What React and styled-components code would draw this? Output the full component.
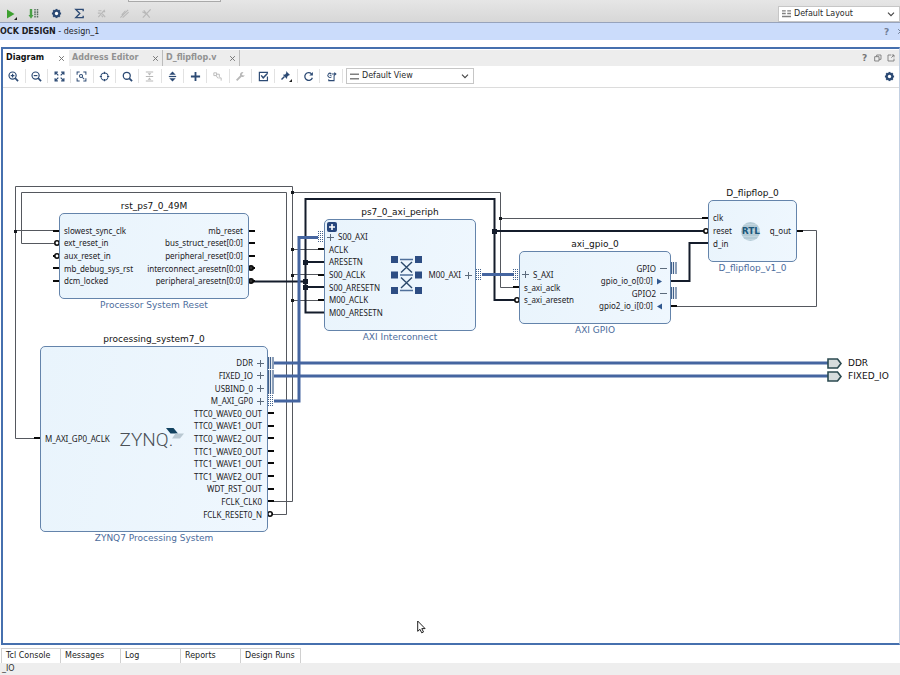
import React from "react";
import styled, { createGlobalStyle, css } from "styled-components";

const navy = "#2c4a74";
const uiFont = `"DejaVu Sans", sans-serif`;
const portFont = `"Noto Sans", "Open Sans", sans-serif`;

const GlobalStyle = createGlobalStyle`
  * { box-sizing: border-box; }
  body { margin: 0; background: #fff; color: #1d1d1f; font: 8px/12px ${uiFont}; }
  button, select { font: inherit; color: inherit; }
`;

/* ---------- window frame ---------- */

const Page = styled.div`
  display: flex;
  flex-direction: column;
  min-height: 100vh;
  overflow: hidden;
`;

const MainToolbar = styled.header`
  display: flex;
  align-items: center;
  justify-content: space-between;
  height: 23px;
  padding-top: 5px;
  background: linear-gradient(#e6e6e6, #d7d7d7);
  border-bottom: 1px solid #97a3bb;
  position: relative;
`;

const ClippedField = styled.div`
  position: absolute;
  top: 0;
  left: 128px;
  width: 93px;
  height: 2px;
  border: 1px solid #a9a9a9;
  border-top: 0;
  background: #f2f2f2;
`;

const IconGroup = styled.div`
  display: flex;
  width: ${(p) => p.$width}px;
`;

const IconButton = styled.button`
  flex: 1;
  display: flex;
  align-items: center;
  justify-content: center;
  height: 14px;
  min-width: 0;
  padding: 0;
  border: 0;
  background: none;
  color: ${(p) => (p.disabled ? "#b8b8b8" : navy)};
  ${(p) =>
    p.$divided &&
    css`
      border-right: 1px solid #e2e2e2;
    `}
`;

const Picker = styled.label`
  display: flex;
  align-items: center;
  gap: 3px;
  width: ${(p) => p.$width}px;
  height: 16px;
  padding: 0 4px 0 3px;
  background: #fff;
  border: 1px solid #c6c6c6;
  color: #808080;
`;

const PickerSelect = styled.select`
  flex: 1;
  min-width: 0;
  height: 14px;
  padding: 0;
  border: 0;
  background: none;
  appearance: none;
  color: #2a2a2a;
  line-height: 14px;
`;

const TitleBar = styled.div`
  display: flex;
  align-items: center;
  justify-content: space-between;
  height: 17px;
  background: #cbdcfb;
`;

const Title = styled.h1`
  margin: 0;
  font-size: 8px;
  line-height: 16px;
  font-weight: 400;
`;

const TitleActions = styled.div`
  display: flex;
  gap: 5px;
  margin-right: -5px;
  color: #707e96;
`;

const GlyphButton = styled.button`
  display: flex;
  align-items: center;
  justify-content: center;
  width: ${(p) => p.$size || 9}px;
  height: 12px;
  padding: 0;
  border: 0;
  background: none;
  color: inherit;
  font-size: 9px;
  font-weight: ${(p) => (p.$bold ? 700 : 400)};
`;

const Panel = styled.main`
  flex: 1;
  display: flex;
  flex-direction: column;
  margin: 7px 0 0 1px;
  border: 2px solid #4670ae;
  border-right: 1px solid #c3d0e2;
`;

/* ---------- editor tabs ---------- */

const TabStrip = styled.div`
  display: flex;
  align-items: stretch;
  height: 17px;
  border-top: 1px solid #fff;
  background: #ededed;
`;

const EditorTab = styled.div`
  display: flex;
  align-items: center;
  justify-content: space-between;
  width: ${(p) => p.$width}px;
  padding: 0 3px;
  background: ${(p) => (p.$active ? "#fff" : "transparent")};
  border-right: 1px solid ${(p) => (p.$active ? "transparent" : "#bcbcbc")};
  color: #777;
`;

const TabLabel = styled.button`
  padding: 0;
  border: 0;
  background: none;
  font-weight: 700;
  white-space: nowrap;
  color: ${(p) => (p.$active ? "#111" : "#929292")};
`;

const TabActions = styled.div`
  display: flex;
  gap: 4px;
  margin-left: auto;
  padding-right: 4px;
  align-items: center;
  color: #777;
`;

const DiagramToolbar = styled.div`
  display: flex;
  align-items: center;
  gap: 3px;
  height: 22px;
  padding: 0 3px 1px 0;
  border-bottom: 1px solid #dcdcdc;
`;

const SettingsSlot = styled.div`
  display: flex;
  width: 14px;
  margin-left: auto;
`;

/* ---------- block design sheet ---------- */

const PAN = { x: 3, y: 88 };

const Sheet = styled.section`
  flex: 1;
  position: relative;
  min-height: 460px;
  overflow: hidden;
  background: #fff;
  font-size: 9px;
`;

const Wires = styled.svg`
  position: absolute;
  left: 0;
  top: 0;
`;

const Node = styled.article`
  position: absolute;
  left: ${(p) => p.$x - PAN.x}px;
  top: ${(p) => p.$y - 14 - PAN.y}px;
  width: ${(p) => p.$w}px;
`;

const NodeName = styled.h2`
  margin: 0;
  height: 14px;
  font-size: 9px;
  line-height: 14px;
  font-weight: 400;
  text-align: center;
  color: #111;
`;

const NodeKind = styled.p`
  margin: 0;
  font-size: 9px;
  line-height: 12px;
  text-align: center;
  color: #4c6c9c;
`;

const NodeBody = styled.div`
  position: relative;
  display: flex;
  align-items: center;
  justify-content: space-between;
  height: ${(p) => p.$h}px;
  padding: 0 3px 0 2px;
  border: 1px solid #6484ab;
  border-radius: 5px;
  background: linear-gradient(100deg, #e9f4fc, #eff7fe);
`;

const PortList = styled.ul`
  display: flex;
  flex-direction: column;
  height: ${(p) => Math.round(p.$count * 12.6)}px;
  margin: 0;
  padding: 0;
  list-style: none;
`;

const Port = styled.li`
  flex: 1;
  display: flex;
  align-items: center;
  justify-content: ${(p) => (p.$out ? "flex-end" : "flex-start")};
  gap: 4px;
  padding: 0 ${(p) => (p.$marked ? 0 : 2)}px;
  font: 8px/12px ${portFont};
  white-space: nowrap;
  color: #1c2024;
`;

const Mark = styled.svg`
  margin-right: ${(p) => (p.$inset ? 5 : 0)}px;
`;

const ExpandButton = styled.button`
  position: absolute;
  left: 2px;
  top: 2px;
  display: flex;
  padding: 0;
  border: 0;
  background: none;
`;

const ZynqLogo = styled.div`
  display: flex;
  align-items: flex-start;
  padding-top: 2px;
  font: 300 19px/24px Roboto, sans-serif;
  color: #4a5056;
`;

const Swoosh = styled.svg`
  margin-left: -7px;
`;

const RtlLogo = styled.div`
  display: grid;
  place-items: center;
  width: 19px;
  height: 19px;
  border-radius: 50%;
  background: repeating-linear-gradient(#b4cbd6 0 2px, #c3d6df 2px 3px);
  color: #1d587b;
  font-weight: 700;
`;

const ExternalPort = styled.div`
  position: absolute;
  left: ${(p) => p.$x - PAN.x}px;
  top: ${(p) => p.$y - PAN.y}px;
  display: flex;
  align-items: center;
  gap: 6px;
  height: 12px;
  color: #111;
`;

const Pointer = styled.svg`
  position: absolute;
  left: ${417 - PAN.x}px;
  top: ${620 - PAN.y}px;
`;

/* ---------- bottom tabs ---------- */

const ConsoleTabs = styled.nav`
  display: flex;
  height: 18px;
  padding: 3px 0 0 1px;
`;

const ConsoleTab = styled.button`
  width: 60px;
  padding: 0 0 0 4px;
  border: 1px solid #d0d0d0;
  border-width: 1px 1px 0 0;
  background: #fff;
  text-align: left;
  white-space: nowrap;
  color: #222;
  &:first-child { border-left-width: 1px; }
`;

const StatusBar = styled.footer`
  height: 12px;
  padding-left: 2px;
  background: #eee;
  color: #333;
`;

/* ---------- icons ---------- */

const Icon = ({ children, size = 11, ...rest }) => (
  <svg width={size} height={size} viewBox="0 0 12 12" fill="none" stroke="currentColor" strokeWidth="1.3" aria-hidden="true" {...rest}>
    {children}
  </svg>
);

const gearTeeth = [0, 45, 90, 135].map((a) => (
  <path key={a} d="M6 1V11" strokeWidth="2.200" transform={`rotate(${a} 6 6)`} />
));

const icons = {
  run: (
    <Icon size={12}>
      <path d="M2 1.500 9.500 6 2 10.500Z" fill="#3da02f" stroke="none" />
      <path d="M12 9V12H9Z" fill="#222" stroke="none" />
    </Icon>
  ),
  bits: (
    <Icon size={12}>
      <path d="M3 1v7" stroke="#4aa046" strokeWidth="2.400" />
      <path d="M.5 7h5L3 10.800Z" fill="#4aa046" stroke="none" />
      <path d="M7 1v8.500M9.500 1v8.500" stroke="#5a6f62" strokeWidth="1.500" strokeDasharray="1.600 .7" />
    </Icon>
  ),
  gear: (
    <Icon>
      {gearTeeth}
      <circle cx="6" cy="6" r="3" strokeWidth="2.200" />
      <circle cx="6" cy="6" r="1.800" fill="#fff" stroke="none" />
    </Icon>
  ),
  sigma: (
    <Icon>
      <path d="M10 3.500V1.500H2L6.300 6 2 10.500h8V8.500" strokeWidth="1.500" />
    </Icon>
  ),
  cutA: (
    <Icon>
      <path d="M2.500 10 9.500 2M2.500 3h3.500M2 5.500h3M7 6.500l3 3.500M6 8l1.500 2M7 4h3" />
    </Icon>
  ),
  cutB: (
    <Icon>
      <path d="M1.500 10.500 10 2M4 10.500 10.500 4.500M3 7.500 7 3" strokeWidth="1.100" />
    </Icon>
  ),
  cutC: (
    <Icon>
      <path d="M2 10.500 10.500 1.500M3 2.500l6.500 8M1.500 4l3.500 2" />
    </Icon>
  ),
  zoomIn: (
    <Icon>
      <circle cx="5" cy="5" r="3.900" />
      <path d="m7.800 7.800 3.200 3.200" strokeWidth="1.800" />
      <path d="M3 5h4M5 3v4" />
    </Icon>
  ),
  zoomOut: (
    <Icon>
      <circle cx="5" cy="5" r="3.900" />
      <path d="m7.800 7.800 3.200 3.200" strokeWidth="1.800" />
      <path d="M3 5h4" />
    </Icon>
  ),
  fit: (
    <Icon strokeWidth="1.300">
      <path d="M1.200 4.200V1.200h3M7.800 1.200h3v3M10.800 7.800v3h-3M4.200 10.800h-3v-3M2 2l2.700 2.700M10 2 7.300 4.700M10 10 7.300 7.300M2 10l2.700-2.700" />
    </Icon>
  ),
  fitSelection: (
    <Icon strokeWidth="1.100">
      <path d="M1.200 4V1.200H4M8 1.200h2.800V4M10.800 8v2.800H8M4 10.800H1.200V8" />
      <circle cx="5.500" cy="5.500" r="1.700" />
      <path d="m7 7 2 2" />
    </Icon>
  ),
  target: (
    <Icon>
      <circle cx="6" cy="6" r="3.900" strokeWidth="1.100" />
      <path d="M6 .8v2.400M6 8.800v2.400M.8 6h2.400M8.800 6h2.400" />
    </Icon>
  ),
  search: (
    <Icon>
      <circle cx="5.200" cy="5.200" r="3.800" strokeWidth="1.400" />
      <path d="m8 8 3 3" strokeWidth="1.900" />
    </Icon>
  ),
  collapse: (
    <Icon>
      <path d="M2 1.200h8M2 6h8M2 10.800h8" strokeWidth="1.100" />
      <path d="M4 2.400h4L6 4.900ZM4 9.600h4L6 7.100Z" fill="currentColor" stroke="none" />
    </Icon>
  ),
  expand: (
    <Icon>
      <path d="M6 .5 9.500 4h-7ZM6 11.500 2.500 8h7Z" fill="currentColor" stroke="none" />
      <path d="M2 6h8" strokeWidth="1.300" />
    </Icon>
  ),
  add: (
    <Icon>
      <path d="M6 1v10M1 6h10" strokeWidth="2" />
    </Icon>
  ),
  connect: (
    <Icon strokeWidth="1">
      <path d="M2 2h3v3H2zM5 3.500h3v3M7 7.500h3v3" />
      <path d="m4.500 5 2 3" />
    </Icon>
  ),
  wrench: (
    <Icon>
      <path d="m1.800 10.200 5-5" strokeWidth="2" />
      <path d="M9.300 1.500A2.600 2.600 0 1 0 10.600 4.500L8.600 5 7.200 3.600Z" fill="currentColor" stroke="none" />
    </Icon>
  ),
  validate: (
    <Icon>
      <path d="M10.300 6v4.500H1.500v-9h8.800V3" />
      <path d="m3.500 4.800 2.200 2.700L10 3" strokeWidth="1.600" />
    </Icon>
  ),
  pin: (
    <Icon size={12}>
      <path d="m6 1 4 4-1.500.500-1.300 1.300L7 9 2.800 4.800l2.400-.2L6.300 3Z" fill="currentColor" stroke="none" />
      <path d="M4.500 6.500 1.500 9.500" strokeWidth="1.400" />
      <path d="M12 9V12H9Z" fill="#222" stroke="none" />
    </Icon>
  ),
  refresh: (
    <Icon>
      <path d="M9.300 3.200A4.200 4.200 0 1 0 10.200 7.300" strokeWidth="1.400" />
      <path d="M10.800 1v4H6.900Z" fill="currentColor" stroke="none" />
    </Icon>
  ),
  regenerate: (
    <Icon strokeWidth="1.100">
      <path d="M5.800 3A2.300 2.300 0 1 0 6 6.300M3 9v1.500h5.800V4.500M6.500 3.200h4.300M9 1.700l1.800 1.500L9 4.700M4 4.700h2" />
    </Icon>
  ),
  close: (
    <Icon size={7} strokeWidth="1.700">
      <path d="m2 2 8 8M10 2l-8 8" />
    </Icon>
  ),
  restore: (
    <Icon size={8}>
      <path d="M1 4h6.500v6.500H1zM4 4V1.500h6.500V8H7.500" />
    </Icon>
  ),
  popOut: (
    <Icon size={8}>
      <path d="M6 1.500H1.500v9h9V7M7 1.500h3.500V5M10.500 1.500 6.500 5.500" />
    </Icon>
  ),
  lines: (
    <Icon size={9} strokeWidth="2.200">
      <path d="M0 3h12M0 9h12" />
    </Icon>
  ),
  layout: (
    <Icon size={9}>
      <path d="M0 2.500h5M7 2.500h5M0 6h5M7 6h5M0 10h12" strokeWidth="1.700" />
    </Icon>
  ),
  chevron: (
    <Icon size={8} stroke="#444" strokeWidth="1.700">
      <path d="m1.500 4 4.500 4.500L10.500 4" />
    </Icon>
  ),
};

const PortMark = ({ kind }) => {
  const arrow = kind === "left" || kind === "right";
  const width = arrow ? 5 : 7;
  return (
    <Mark $inset={arrow} width={width} height="7" viewBox={`0 0 ${width} 7`} aria-hidden="true">
      {kind === "plus" && <path d="M0 3.500h7M3.500 0v7" stroke="#5c6b7c" />}
      {kind === "minus" && <path d="M0 3.500h7" stroke="#5c6b7c" />}
      {kind === "right" && <path d="M0 .5 5 3.500 0 6.500Z" fill="#31588f" />}
      {kind === "left" && <path d="M5 .5 0 3.500 5 6.500Z" fill="#31588f" />}
    </Mark>
  );
};

const Crossbar = () => (
  <svg width="31" height="38" viewBox="0 0 31 38" aria-hidden="true">
    <g fill="#2d4d83">
      {[0, 15.500, 31].map((y) => (
        <React.Fragment key={y}>
          <rect x="0" y={y} width="7" height="7" />
          <rect x="24" y={y} width="7" height="7" />
        </React.Fragment>
      ))}
    </g>
    <path d="M9 3.500h13M9 19h13M9 34.500h13" stroke="#50709b" strokeWidth="1.400" />
    <path d="m10 6 11 10.500M21 6 10 16.500M10 21.500 21 32M21 21.500 10 32" stroke="#2c4a6c" strokeWidth="1.400" />
  </svg>
);

const Zynq = () => (
  <ZynqLogo>
    ZYNQ.
    <Swoosh width="18" height="12" viewBox="0 0 18 12" aria-hidden="true">
      <path d="M0 0h7.500l4.500 5.500H4.500Z" fill="#124260" />
      <path d="M9.500 5.500H18L14 10.500H6Z" fill="#b9c8d2" />
    </Swoosh>
  </ZynqLogo>
);

/* ---------- data ---------- */

const mainTools = [
  ["run", "Run"],
  ["bits", "Generate Bitstream"],
  ["gear", "Settings"],
  ["sigma", "Report"],
  ["cutA", "Cut trace", true],
  ["cutB", "Edit trace", true],
  ["cutC", "Clear trace", true],
];

const diagramTools = [
  ["zoomIn", "Zoom in"],
  ["zoomOut", "Zoom out"],
  ["fit", "Zoom fit"],
  ["fitSelection", "Zoom to selection"],
  ["target", "Centre"],
  ["search", "Search"],
  ["collapse", "Collapse all", true],
  ["expand", "Expand all"],
  ["add", "Add IP"],
  ["connect", "Make connection", true],
  ["wrench", "Customize block", true],
  ["validate", "Validate design"],
  ["pin", "Pin"],
  ["refresh", "Regenerate layout"],
  ["regenerate", "Optimize routing"],
];

const editorTabs = [
  ["Diagram", 66, true],
  ["Address Editor", 94],
  ["D_flipflop.v", 77],
];

const consoleTabs = ["Tcl Console", "Messages", "Log", "Reports", "Design Runs"];

const nodes = [
  {
    name: "rst_ps7_0_49M", kind: "Processor System Reset", x: 59, y: 213, w: 190, h: 86,
    inputs: ["slowest_sync_clk", "ext_reset_in", "aux_reset_in", "mb_debug_sys_rst", "dcm_locked"],
    outputs: ["mb_reset", "bus_struct_reset[0:0]", "peripheral_reset[0:0]", "interconnect_aresetn[0:0]", "peripheral_aresetn[0:0]"],
  },
  {
    name: "ps7_0_axi_periph", kind: "AXI Interconnect", x: 324, y: 219, w: 152, h: 112, expandable: true, logo: <Crossbar />,
    inputs: [["S00_AXI", "plus"], "ACLK", "ARESETN", "S00_ACLK", "S00_ARESETN", "M00_ACLK", "M00_ARESETN"],
    outputs: [["M00_AXI", "plus"]],
  },
  {
    name: "axi_gpio_0", kind: "AXI GPIO", x: 519, y: 251, w: 152, h: 73,
    inputs: [["S_AXI", "plus"], "s_axi_aclk", "s_axi_aresetn"],
    outputs: [["GPIO", "minus"], ["gpio_io_o[0:0]", "right"], ["GPIO2", "minus"], ["gpio2_io_i[0:0]", "left"]],
  },
  {
    name: "D_flipflop_0", kind: "D_flipflop_v1_0", x: 708, y: 200, w: 89, h: 62, logo: <RtlLogo>RTL</RtlLogo>,
    inputs: ["clk", "reset", "d_in"],
    outputs: ["q_out"],
  },
  {
    name: "processing_system7_0", kind: "ZYNQ7 Processing System", x: 40, y: 346, w: 228, h: 186, logo: <Zynq />,
    inputs: ["M_AXI_GP0_ACLK"],
    outputs: [
      ["DDR", "plus"], ["FIXED_IO", "plus"], ["USBIND_0", "plus"], ["M_AXI_GP0", "plus"],
      "TTC0_WAVE0_OUT", "TTC0_WAVE1_OUT", "TTC0_WAVE2_OUT", "TTC1_WAVE0_OUT", "TTC1_WAVE1_OUT", "TTC1_WAVE2_OUT",
      "WDT_RST_OUT", "FCLK_CLK0", "FCLK_RESET0_N",
    ],
  },
];

const thinNets = [
  "M35 438.500H15.500V186.500H292.500V501.500H273",
  "M15.500 230.500H54",
  "M273 514.500H286.500V192.500H21.500V243.500H54",
  "M292.500 192.500H500.500V287.500H514",
  "M500.500 218.500H703",
  "M292.500 249.500H319M292.500 274.500H319M292.500 300.500H319",
  "M802 230.500H816.500V306.500H676",
];

const thickNets = [
  "M250 281.500H305.500V199H494.500V300H515",
  "M305.500 281V312.500H324M305.500 262H324M305.500 287H324",
  "M494.500 231H704",
  "M671 281H689.500V243H708",
];

const busNets = ["M274 363H828", "M274 376H828", "M274 401H299V237.500H318", "M482 274.500H514"];

const stubs = [
  ...[231, 268, 281].map((y) => [53, y]),
  ...[231, 243, 256].map((y) => [249, y]),
  ...[249, 275, 300].map((y) => [318, y]),
  ...[413, 426, 438, 451, 463, 476, 489, 501].map((y) => [268, y]),
  [34, 438], [513, 287], [671, 306], [702, 218], [797, 231],
];

const junctions = [[15, 231], [292, 192], [292, 249], [292, 275], [292, 300], [500, 218]];
const thickJunctions = [[305, 262], [305, 281], [305, 287], [494, 231]];
const bubbles = [[57, 243], [57, 256], [251, 268], [251, 281], [270, 514], [517, 300], [706, 231]];
const solidBuses = [[269, 363], [269, 376], [269, 388], [672, 268], [672, 293]];
const dottedBuses = [[269, 401], [319, 237], [477, 275], [514, 275]];

/* ---------- parts ---------- */

const Ports = ({ items, out }) => (
  <PortList $count={items.length}>
    {items.map((item) => {
      const [label, mark] = Array.isArray(item) ? item : [item];
      return (
        <Port key={label} $out={out} $marked={Boolean(mark)}>
          {!out && mark && <PortMark kind={mark} />}
          <span>{label}</span>
          {out && mark && <PortMark kind={mark} />}
        </Port>
      );
    })}
  </PortList>
);

const Tool = ({ tool: [icon, label, disabled], divided }) => (
  <IconButton type="button" aria-label={label} title={label} disabled={disabled} $divided={divided}>
    {icons[icon]}
  </IconButton>
);

const Netlist = () => (
  <Wires width="897" height="460" viewBox={`${PAN.x} ${PAN.y} 897 460`} fill="none" aria-hidden="true">
    <g stroke="#55585e">{thinNets.map((d) => <path key={d} d={d} />)}</g>
    <g stroke="#141c2b" strokeWidth="2">{thickNets.map((d) => <path key={d} d={d} />)}</g>
    <g stroke="#4565a0" strokeWidth="3">{busNets.map((d) => <path key={d} d={d} />)}</g>
    <g stroke="#0a0a0a" strokeWidth="2">{stubs.map(([x, y]) => <path key={`${x}-${y}`} d={`M${x} ${y}h6`} />)}</g>
    <g stroke="#0a0a0a" strokeWidth="2"><path d="M249 268h6M249 281h6M268 514h5M53 256h3" /></g>
    <g fill="#15181d">{junctions.map(([x, y]) => <rect key={`${x}-${y}`} x={x - 1} y={y - 1} width="3" height="3" />)}</g>
    <g fill="#141c2b">{thickJunctions.map(([x, y]) => <rect key={`${x}-${y}`} x={x - 2} y={y - 2} width="5" height="5" />)}</g>
    <g stroke="#0a0a0a" strokeWidth="1.600">{bubbles.map(([x, y]) => <circle key={`${x}-${y}`} cx={x} cy={y} r="2.200" fill={x === 251 ? "#333" : "#fff"} />)}</g>
    <g stroke="#41618b">{solidBuses.map(([x, y]) => <path key={`${x}-${y}`} strokeWidth="1.200" d={`M${x - 0.5} ${y - 6}v12M${x + 1.5} ${y - 6}v12M${x + 4} ${y - 6}v12`} />)}</g>
    <g stroke="#41618b" strokeDasharray="1 1">{dottedBuses.map(([x, y]) => <path key={`${x}-${y}`} d={`M${x - 0.5} ${y - 6}v12M${x + 1.5} ${y - 6}v12M${x + 3.5} ${y - 6}v12`} />)}</g>
  </Wires>
);

export default function App() {
  return (
    <Page>
      <GlobalStyle />
      <MainToolbar>
        <ClippedField />
        <IconGroup $width={158}>
          {mainTools.map((t) => <Tool key={t[0]} tool={t} />)}
        </IconGroup>
        <Picker $width={122}>
          {icons.layout}
          <PickerSelect aria-label="Layout"><option>Default Layout</option></PickerSelect>
          {icons.chevron}
        </Picker>
      </MainToolbar>
      <TitleBar>
        <Title><b>OCK DESIGN</b> - design_1</Title>
        <TitleActions>
          <GlyphButton type="button" aria-label="Help" $bold>?</GlyphButton>
          <GlyphButton type="button" aria-label="Close design">{icons.close}</GlyphButton>
        </TitleActions>
      </TitleBar>
      <Panel>
        <TabStrip>
          {editorTabs.map(([label, width, active]) => (
            <EditorTab key={label} $width={width} $active={active}>
              <TabLabel type="button" $active={active}>{label}</TabLabel>
              <GlyphButton type="button" aria-label={`Close ${label}`} $size={8}>{icons.close}</GlyphButton>
            </EditorTab>
          ))}
          <TabActions>
            <GlyphButton type="button" aria-label="Help" $bold>?</GlyphButton>
            <GlyphButton type="button" aria-label="Restore">{icons.restore}</GlyphButton>
            <GlyphButton type="button" aria-label="Float">{icons.popOut}</GlyphButton>
          </TabActions>
        </TabStrip>
        <DiagramToolbar>
          <IconGroup $width={340}>
            {diagramTools.map((t) => <Tool key={t[0]} tool={t} divided />)}
          </IconGroup>
          <Picker $width={128}>
            {icons.lines}
            <PickerSelect aria-label="View"><option>Default View</option></PickerSelect>
            {icons.chevron}
          </Picker>
          <SettingsSlot><Tool tool={["gear", "Diagram settings"]} /></SettingsSlot>
        </DiagramToolbar>
        <Sheet>
          <Netlist />
          {nodes.map((n) => (
            <Node key={n.name} $x={n.x} $y={n.y} $w={n.w}>
              <NodeName>{n.name}</NodeName>
              <NodeBody $h={n.h}>
                {n.expandable && (
                  <ExpandButton type="button" aria-label="Expand block">
                    <svg width="10" height="10" viewBox="0 0 10 10">
                      <rect width="10" height="10" rx="2" fill="#27467c" />
                      <path d="M5 2v6M2 5h6" stroke="#fff" strokeWidth="1.600" />
                    </svg>
                  </ExpandButton>
                )}
                <Ports items={n.inputs} />
                {n.logo}
                <Ports items={n.outputs} out />
              </NodeBody>
              <NodeKind>{n.kind}</NodeKind>
            </Node>
          ))}
          {[["DDR", 357], ["FIXED_IO", 370]].map(([label, y]) => (
            <ExternalPort key={label} $x={827} $y={y}>
              <svg width="15" height="11" viewBox="0 0 15 11" aria-hidden="true">
                <path d="M1 1h9.500l3.500 4.500-3.500 4.500H1Z" fill="#d6dcdd" stroke="#2b4a50" strokeWidth="1.600" />
              </svg>
              {label}
            </ExternalPort>
          ))}
          <Pointer width="9" height="14" viewBox="0 0 9 14" aria-hidden="true">
            <path d="M.7 1v10.300l2.300-2 1.700 3.500 1.800-.8-1.700-3.400h3.300Z" fill="#fff" stroke="#222" />
          </Pointer>
        </Sheet>
      </Panel>
      <ConsoleTabs>
        {consoleTabs.map((label) => <ConsoleTab key={label} type="button">{label}</ConsoleTab>)}
      </ConsoleTabs>
      <StatusBar>_IO</StatusBar>
    </Page>
  );
}
